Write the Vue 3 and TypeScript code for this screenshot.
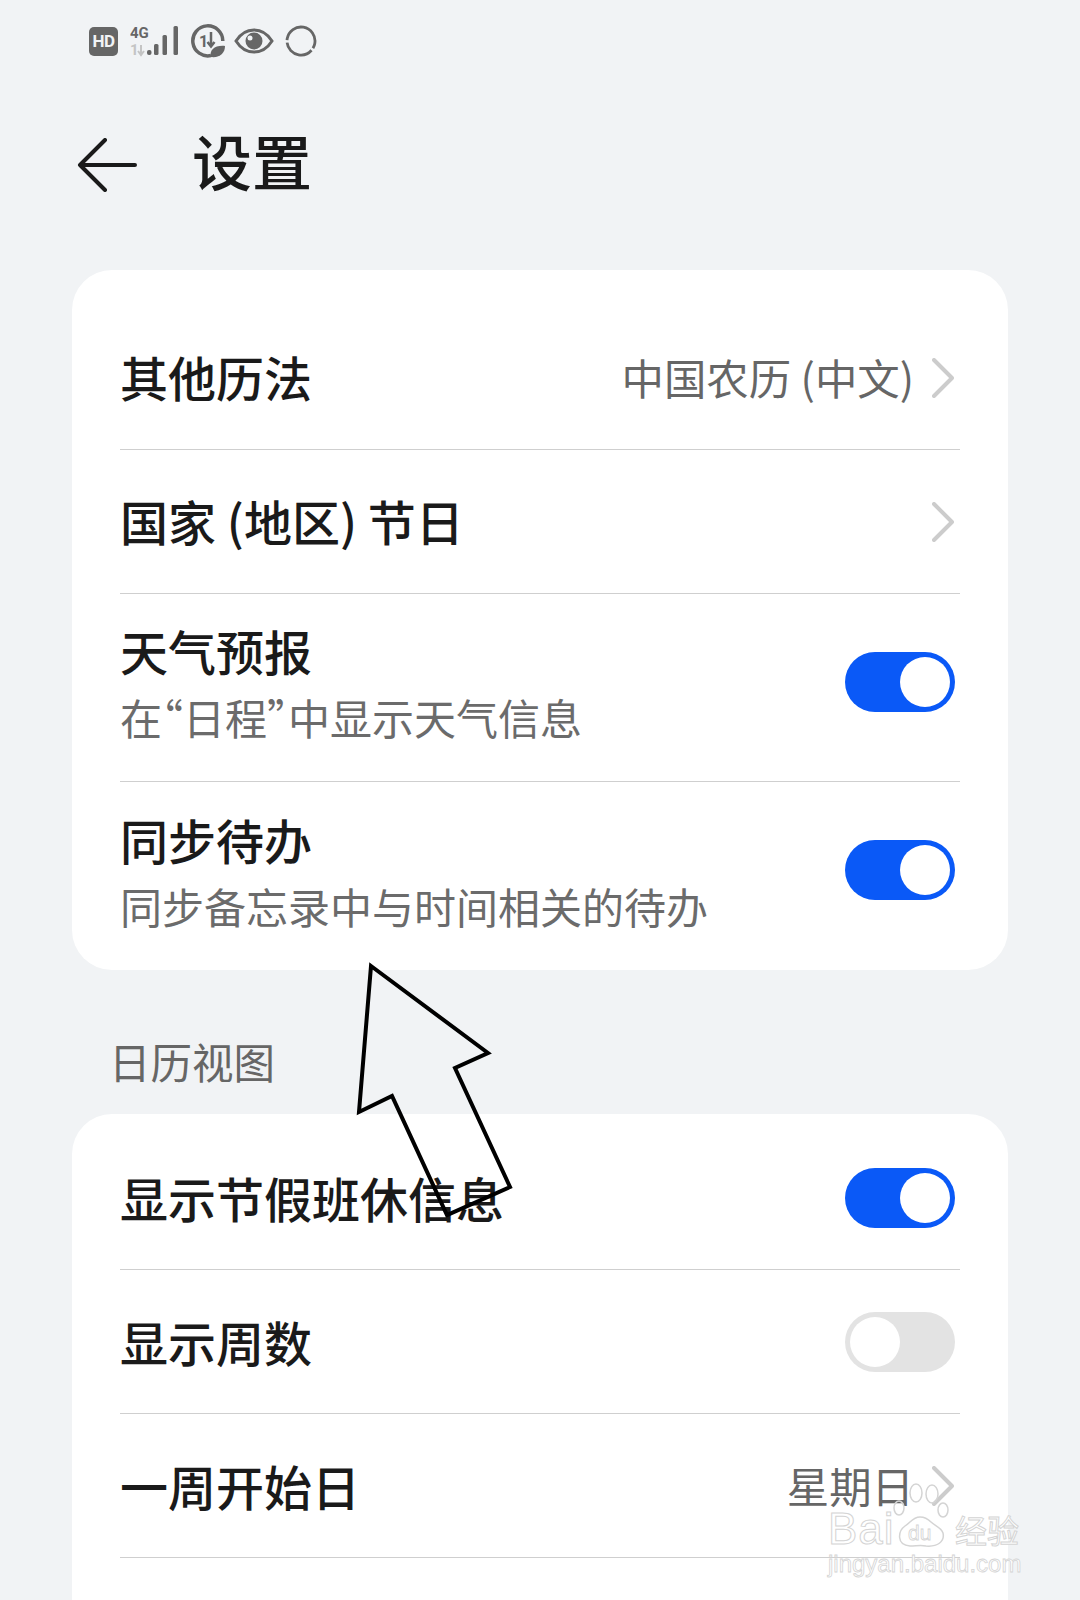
<script setup lang="ts">
interface Row {
  title: string
  sub?: string
  value?: string
  chevron?: boolean
  toggle?: boolean
}

const firstCard: Row[] = [
  { title: '其他历法', value: '中国农历 (中文)', chevron: true },
  { title: '国家 (地区) 节日', chevron: true },
  { title: '天气预报', sub: '在“日程”中显示天气信息', toggle: true },
  { title: '同步待办', sub: '同步备忘录中与时间相关的待办', toggle: true },
]

const secondCard: Row[] = [
  { title: '显示节假班休信息', toggle: true },
  { title: '显示周数', toggle: false },
  { title: '一周开始日', value: '星期日', chevron: true },
  { title: '' },
]
</script>

<template>
  <div class="page">
    <div class="status">
      <span class="hd">HD</span>
      <svg class="signal" width="52" height="34" viewBox="0 0 52 34">
        <text x="0" y="14" class="net">4G</text>
        <text x="0" y="31" class="net dim">1</text>
        <path d="M11 21v10M8 27l3 4 3-4" fill="none" stroke="#c4c4c4" stroke-width="2" />
        <rect x="17" y="26" width="4.500" height="5" rx="2" fill="#666" />
        <rect x="24" y="20" width="4.500" height="11" rx="1.500" fill="#666" />
        <rect x="32.500" y="11" width="4.500" height="20" rx="1.500" fill="#666" />
        <rect x="43.500" y="2" width="4.500" height="29" rx="1.500" fill="#666" />
      </svg>
      <svg class="saver" width="34" height="34" viewBox="0 0 34 34">
        <path d="M20 31.500A15 15 0 1 1 31.800 17" fill="none" stroke="#666" stroke-width="3.500" />
        <text x="8" y="23" class="num">1</text>
        <path d="M20 8v14M16.500 18l3.500 4.500 3.500-4.500" fill="none" stroke="#666" stroke-width="2.500" />
        <path d="M20 33c-2-7 4-12 14-11 0 7-5 12-14 11z" fill="#666" />
      </svg>
      <svg class="eye" width="40" height="28" viewBox="0 0 40 28">
        <path d="M2 14C7 6 13 3 20 3s13 3 18 11c-5 8-11 11-18 11S7 22 2 14z" fill="none" stroke="#666" stroke-width="3" />
        <circle cx="20" cy="14" r="8.500" fill="#666" />
        <circle cx="16" cy="11" r="2.500" fill="#f1f3f5" />
      </svg>
      <svg class="ring" width="32" height="32" viewBox="0 0 32 32">
        <circle cx="16" cy="16" r="14" fill="none" stroke="#666" stroke-width="2.800" stroke-dasharray="27 2.500 32 2.500 24" transform="rotate(-80 16 16)" />
      </svg>
    </div>

    <header class="head">
      <svg class="back" width="60" height="54" viewBox="0 0 60 54">
        <path d="M58 27H3M28 2 3 27l25 25" fill="none" stroke="#1a1a1a" stroke-width="4" stroke-linecap="round" stroke-linejoin="round" />
      </svg>
      <h1 class="title">设置</h1>
    </header>

    <section class="card first">
      <div v-for="(r, i) in firstCard" :key="i" class="row" :class="{ two: r.sub }">
        <div class="label">
          <div class="name">{{ r.title }}</div>
          <div v-if="r.sub" class="sub">{{ r.sub }}</div>
        </div>
        <span v-if="r.value" class="value">{{ r.value }}</span>
        <svg v-if="r.chevron" class="chev" width="22" height="40" viewBox="0 0 22 40">
          <path d="M2 2l18 18L2 38" fill="none" stroke="#ccc" stroke-width="4" stroke-linecap="round" stroke-linejoin="round" />
        </svg>
        <span v-if="r.toggle !== undefined" class="switch" :class="{ on: r.toggle }"><i class="knob"></i></span>
      </div>
    </section>

    <div class="section">日历视图</div>

    <section class="card second">
      <div v-for="(r, i) in secondCard" :key="i" class="row">
        <div class="label">
          <div class="name">{{ r.title }}</div>
        </div>
        <span v-if="r.value" class="value">{{ r.value }}</span>
        <svg v-if="r.chevron" class="chev" width="22" height="40" viewBox="0 0 22 40">
          <path d="M2 2l18 18L2 38" fill="none" stroke="#ccc" stroke-width="4" stroke-linecap="round" stroke-linejoin="round" />
        </svg>
        <span v-if="r.toggle !== undefined" class="switch" :class="{ on: r.toggle }"><i class="knob"></i></span>
      </div>
    </section>

    <!-- annotation arrow drawn over the screenshot -->
    <svg class="pointer" width="1080" height="1600" viewBox="0 0 1080 1600">
      <path d="M371 966 488 1053 455 1068 510 1187 447 1215 392 1096 359 1112z" fill="none" stroke="#000" stroke-width="4" />
    </svg>

    <!-- baidu watermark -->
    <div class="mark">
      <svg class="paw" width="64" height="70" viewBox="0 0 64 70">
        <g fill="none" stroke="#d4d4d4" stroke-width="1.500">
          <ellipse cx="13" cy="28" rx="5" ry="7" />
          <ellipse cx="30" cy="13" rx="6" ry="9" />
          <ellipse cx="46" cy="14" rx="6" ry="9" />
          <ellipse cx="57" cy="30" rx="5" ry="7" />
          <path d="M34 37c-7 0-9 5-15 9-7 5-9 19 5 20 6 0 11-1 16 0 11 1 19-4 17-13-2-6-8-7-12-11-3-3-6-5-11-5z" />
        </g>
        <text x="22" y="60" class="du">du</text>
      </svg>
      <div class="mark-top">
        <span class="bai">Bai</span>
        <span class="jy">经验</span>
      </div>
      <div class="mark-url">jingyan.baidu.com</div>
    </div>
  </div>
</template>

<style scoped>
.page {
  position: relative;
  width: 1080px;
  height: 1600px;
  overflow: hidden;
  background: #f1f3f5;
  font-family: "Noto Sans CJK SC", "Noto Sans", sans-serif;
  color: #1a1a1a;
}
.status {
  display: flex;
  align-items: center;
  height: 34px;
  padding: 24px 0 0 89px;
}
.hd {
  display: flex;
  align-items: center;
  justify-content: center;
  width: 29px;
  height: 29px;
  border-radius: 5px;
  background: #666;
  color: #f1f3f5;
  font-family: "Roboto", sans-serif;
  font-size: 17px;
  font-weight: 700;
  letter-spacing: -0.5px;
}
.signal { margin-left: 12px; }
.saver { margin-left: 9px; }
.eye { margin-left: 9px; }
.ring { margin-left: 11px; }
.net {
  font-family: "Roboto", sans-serif;
  font-size: 15px;
  font-weight: 700;
  fill: #666;
}
.net.dim { fill: #c4c4c4; }
.num {
  font-family: "Roboto", sans-serif;
  font-size: 16px;
  font-weight: 700;
  fill: #666;
}
.head {
  display: flex;
  align-items: center;
  height: 60px;
  margin-top: 76px;
  padding-left: 77px;
}
.back { margin-top: 2px; }
.title {
  margin: 0 0 8px 55px;
  font-size: 60px;
  font-weight: 500;
  line-height: 60px;
}
.card {
  margin: 0 72px;
  padding: 0 48px;
  background: #fff;
  border-radius: 40px;
}
.first {
  margin-top: 76px;
  padding-top: 36px;
}
.second {
  margin-top: 16px;
  padding-top: 12px;
}
.row {
  display: flex;
  align-items: center;
  height: 144px;
  box-sizing: border-box;
  border-bottom: 1px solid #cfcfcf;
}
.row.two {
  height: 188px;
  padding-bottom: 12px;
}
.row.two .label { padding-top: 3px; }
.row:last-child { border-bottom: 0; }
.label { flex: 1; }
.name {
  font-size: 48px;
  font-weight: 500;
  line-height: 64px;
}
.first .row:not(.two) .name { margin-bottom: 4px; }
.second .name { margin-bottom: 2px; }
.sub {
  margin-top: 4px;
  font-size: 42px;
  font-feature-settings: "halt";
  line-height: 62px;
  color: #6b6b6b;
}
.value {
  margin-right: 18px;
  margin-bottom: 2px;
  font-size: 42.400px;
  line-height: 44px;
  color: #666;
}
.chev {
  flex: none;
  margin-right: 6px;
}
.switch {
  display: flex;
  flex: none;
  box-sizing: border-box;
  width: 110px;
  height: 60px;
  margin-right: 5px;
  padding: 5px;
  border-radius: 30px;
  background: #e3e3e3;
}
.switch.on {
  justify-content: flex-end;
  background: #0a59f7;
}
.knob {
  width: 50px;
  height: 50px;
  border-radius: 50%;
  background: #fff;
}
.section {
  margin: 54px 0 0 109px;
  height: 74px;
  font-size: 41.500px;
  line-height: 74px;
  color: #666;
}
.pointer {
  position: absolute;
  left: 0;
  top: 0;
}
.mark {
  position: absolute;
  left: 828px;
  top: 1480px;
  width: 200px;
  height: 100px;
}
.paw {
  position: absolute;
  left: 58px;
  top: 0;
}
.du {
  font-family: "Liberation Sans", sans-serif;
  font-size: 21px;
  fill: #fff;
  stroke: #d4d4d4;
  stroke-width: 0.8px;
}
.mark-top {
  position: absolute;
  left: 0;
  top: 28px;
  display: flex;
  width: 191px;
  justify-content: space-between;
  align-items: center;
}
.bai {
  font-family: "Liberation Sans", sans-serif;
  font-size: 44px;
  line-height: 42px;
  letter-spacing: 1px;
  color: #fff;
  -webkit-text-stroke: 1px #d4d4d4;
}
.jy {
  font-size: 32px;
  line-height: 42px;
  color: #fff;
  -webkit-text-stroke: 1px #d4d4d4;
}
.mark-url {
  position: absolute;
  left: 0;
  top: 72px;
  width: 200px;
  font-family: "Liberation Sans", sans-serif;
  font-size: 24px;
  line-height: 24px;
  color: #fff;
  -webkit-text-stroke: 0.8px #d4d4d4;
  white-space: nowrap;
}
</style>
